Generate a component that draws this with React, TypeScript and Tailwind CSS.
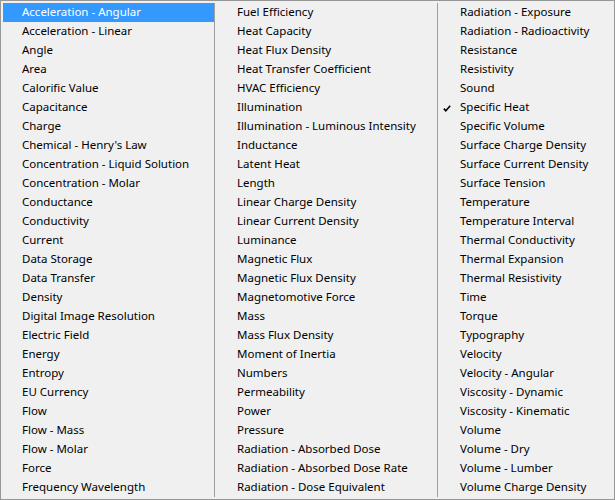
const columns: string[][] = [
  [
    "Acceleration - Angular",
    "Acceleration - Linear",
    "Angle",
    "Area",
    "Calorific Value",
    "Capacitance",
    "Charge",
    "Chemical - Henry's Law",
    "Concentration - Liquid Solution",
    "Concentration - Molar",
    "Conductance",
    "Conductivity",
    "Current",
    "Data Storage",
    "Data Transfer",
    "Density",
    "Digital Image Resolution",
    "Electric Field",
    "Energy",
    "Entropy",
    "EU Currency",
    "Flow",
    "Flow - Mass",
    "Flow - Molar",
    "Force",
    "Frequency Wavelength",
  ],
  [
    "Fuel Efficiency",
    "Heat Capacity",
    "Heat Flux Density",
    "Heat Transfer Coefficient",
    "HVAC Efficiency",
    "Illumination",
    "Illumination - Luminous Intensity",
    "Inductance",
    "Latent Heat",
    "Length",
    "Linear Charge Density",
    "Linear Current Density",
    "Luminance",
    "Magnetic Flux",
    "Magnetic Flux Density",
    "Magnetomotive Force",
    "Mass",
    "Mass Flux Density",
    "Moment of Inertia",
    "Numbers",
    "Permeability",
    "Power",
    "Pressure",
    "Radiation - Absorbed Dose",
    "Radiation - Absorbed Dose Rate",
    "Radiation - Dose Equivalent",
  ],
  [
    "Radiation - Exposure",
    "Radiation - Radioactivity",
    "Resistance",
    "Resistivity",
    "Sound",
    "Specific Heat",
    "Specific Volume",
    "Surface Charge Density",
    "Surface Current Density",
    "Surface Tension",
    "Temperature",
    "Temperature Interval",
    "Thermal Conductivity",
    "Thermal Expansion",
    "Thermal Resistivity",
    "Time",
    "Torque",
    "Typography",
    "Velocity",
    "Velocity - Angular",
    "Viscosity - Dynamic",
    "Viscosity - Kinematic",
    "Volume",
    "Volume - Dry",
    "Volume - Lumber",
    "Volume Charge Density",
  ],
];

const highlighted = "Acceleration - Angular";
const checked = "Specific Heat";

function Check() {
  return (
    <svg width="8" height="7" viewBox="0 0 8 7" className="absolute left-[5px] top-[7px]" aria-hidden>
      <path d="M0.8 3.6 L2.8 5.8 L7.2 0.8" fill="none" stroke="#000" strokeWidth="1.6" />
    </svg>
  );
}

function MenuColumn({ items, width, indent }: { items: string[]; width: string; indent: string }) {
  return (
    <div className={`${width} shrink-0 overflow-hidden`}>
      {items.map((label) => {
        const active = label === highlighted;
        return (
          <div
            key={label}
            className={`relative h-[19px] whitespace-nowrap leading-[17px] ${indent} ${
              active ? "bg-[#3399ff] text-white" : "text-black"
            }`}
          >
            {label === checked && <Check />}
            {label}
          </div>
        );
      })}
    </div>
  );
}

export default function App() {
  return (
    <div className="flex h-[500px] w-[615px] border border-[#979797] bg-[#f0f0f0] p-[2px] text-[11.5px] font-['Noto_Sans',sans-serif]">
      <MenuColumn items={columns[0]} width="w-[211px]" indent="pl-[19px]" />
      <div className="w-px shrink-0 bg-[#a0a0a0]" />
      <MenuColumn items={columns[1]} width="w-[222px]" indent="pl-[22px]" />
      <div className="w-px shrink-0 bg-[#a0a0a0]" />
      <MenuColumn items={columns[2]} width="flex-1" indent="pl-[22px]" />
    </div>
  );
}
